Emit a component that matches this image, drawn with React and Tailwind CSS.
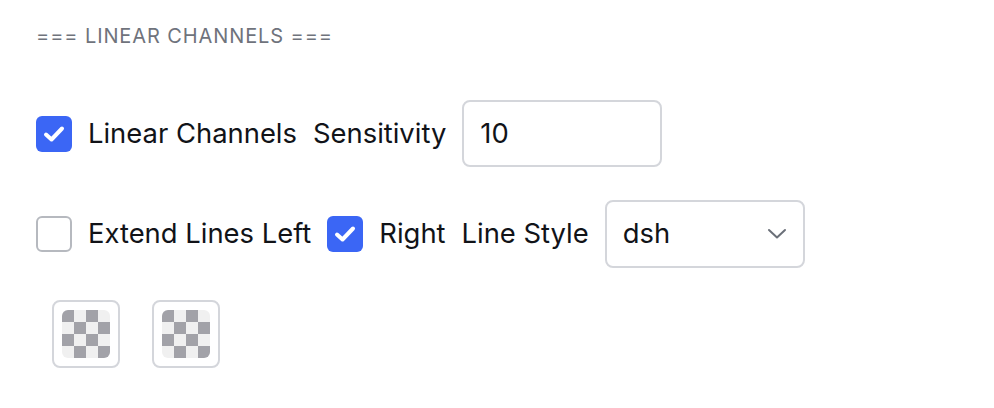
function Check({ checked }) {
  if (!checked) {
    return (
      <span className="w-9 h-9 shrink-0 rounded-md border-2 border-[#b6b9bf] bg-white" />
    );
  }
  return (
    <span className="w-9 h-9 shrink-0 rounded-md bg-[#3b66f5] flex items-center justify-center">
      <svg viewBox="0 0 36 36" className="w-9 h-9">
        <path
          d="M10 18.5 L15.5 23.5 L26 12.5"
          fill="none"
          stroke="white"
          strokeWidth="4"
          strokeLinecap="round"
          strokeLinejoin="round"
        />
      </svg>
    </span>
  );
}

function Checker() {
  const cells = [];
  for (let r = 0; r < 4; r++) {
    for (let c = 0; c < 4; c++) {
      const dark = (r + c) % 2 === 0;
      cells.push(
        <span
          key={r + "-" + c}
          className={dark ? "bg-[#a2a2a8]" : "bg-[#f0f0f0]"}
        />
      );
    }
  }
  return (
    <button className="w-[68px] h-[68px] rounded-lg border-2 border-[#d4d6db] bg-white flex items-center justify-center">
      <span className="w-12 h-12 rounded-md overflow-hidden grid grid-cols-4 grid-rows-4">
        {cells}
      </span>
    </button>
  );
}

export default function App() {
  return (
    <div
      className="w-[994px] h-[408px] bg-white pl-9 pt-[22px] text-[#111318]"
      style={{ fontFamily: "Inter, 'Noto Sans', sans-serif" }}
    >
      <div className="text-[20px] leading-7 text-[#6f737c] tracking-[0.045em]">
        === LINEAR CHANNELS ===
      </div>

      <div className="mt-[50px] flex items-center gap-4 h-[67px] text-[27.4px]">
        <Check checked />
        <span>Linear Channels</span>
        <span>Sensitivity</span>
        <div className="w-[200px] h-[67px] rounded-lg border-2 border-[#d4d6db] flex items-center px-4">
          10
        </div>
      </div>

      <div className="mt-[33px] flex items-center gap-4 h-[68px] text-[27.4px]">
        <Check checked={false} />
        <span>Extend Lines Left</span>
        <Check checked />
        <span>Right</span>
        <span>Line Style</span>
        <div className="w-[200px] h-[68px] rounded-lg border-2 border-[#d4d6db] flex items-center justify-between pl-4 pr-4">
          <span>dsh</span>
          <svg viewBox="0 0 20 12" className="w-5 h-3">
            <path
              d="M2 2 L10 9.5 L18 2"
              fill="none"
              stroke="#6b7079"
              strokeWidth="2"
              strokeLinecap="round"
              strokeLinejoin="round"
            />
          </svg>
        </div>
      </div>

      <div className="mt-8 ml-4 flex gap-8">
        <Checker />
        <Checker />
      </div>
    </div>
  );
}
